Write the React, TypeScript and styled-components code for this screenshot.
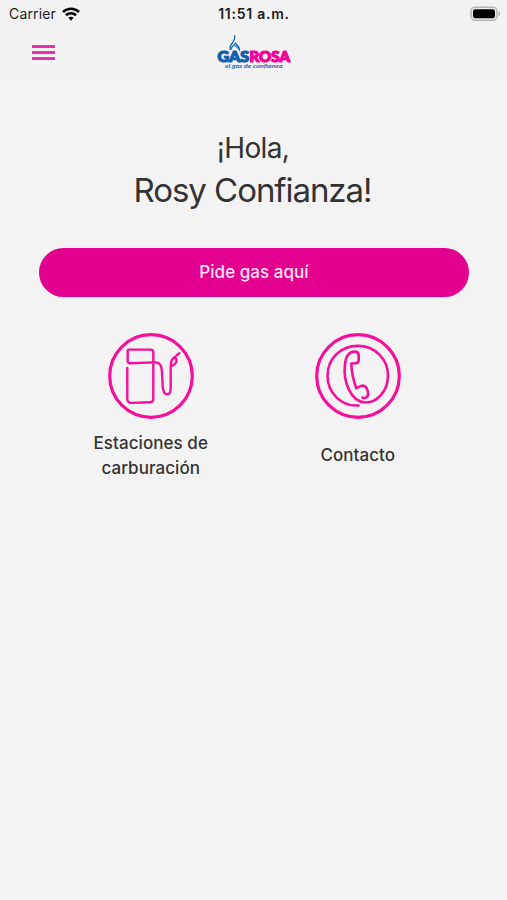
import React from "react";
import styled, { createGlobalStyle } from "styled-components";

const PINK = "#e4008f";
const ICON_PINK = "#f50f9c";

const GlobalStyle = createGlobalStyle`
  * { box-sizing: border-box; }
  body { margin: 0; background: #f3f3f3; font-family: Inter, "Liberation Sans", sans-serif; }
`;

const Screen = styled.div`
  min-height: 900px;
  width: 507px;
  display: flex;
  flex-direction: column;
  background: #f3f3f3;
  color: #333;
`;

const Header = styled.header`
  height: 81px;
  background: #f2f2f2;
`;

const StatusBar = styled.div`
  display: grid;
  grid-template-columns: 1fr auto 1fr;
  align-items: center;
  height: 27px;
  padding: 0 6px 0 9px;
  color: #1c1c1c;
`;

const Carrier = styled.div`
  display: flex;
  align-items: center;
  gap: 6px;
  font-size: 14px;
  line-height: 20px;
  letter-spacing: 0.15px;
`;

const Time = styled.div`
  font-size: 14px;
  font-weight: 600;
  letter-spacing: 0.75px;
  margin-right: 2px;
`;

const Battery = styled.div`
  display: flex;
  justify-content: flex-end;
`;

const NavBar = styled.nav`
  display: grid;
  grid-template-columns: 1fr auto 1fr;
  height: 54px;
  padding: 0 32px;
`;

const MenuButton = styled.button`
  display: flex;
  flex-direction: column;
  gap: 3px;
  width: 23px;
  height: 15px;
  margin-top: 18px;
  padding: 0;
  border: 0;
  background: none;
`;

const MenuLine = styled.span`
  flex: none;
  height: 3px;
  width: 23px;
  background: linear-gradient(#e85db2, #df1f98 40%, #e34bab);
`;

const Greeting = styled.h1`
  display: flex;
  flex-direction: column;
  align-items: center;
  margin: 47px 0 0;
  font-weight: 400;
`;

const Hello = styled.span`
  padding-right: 1px;
  font-size: 28px;
  line-height: 41px;
  letter-spacing: -0.65px;
`;

const Name = styled.span`
  padding-right: 2px;
  font-size: 33px;
  line-height: 42px;
  letter-spacing: -1.05px;
`;

const OrderButton = styled.button`
  height: 49px;
  margin: 37px 38px 0 39px;
  padding: 0 0 1px;
  border: 0;
  border-radius: 25px;
  background: ${PINK};
  color: #ffe3f6;
  font: 500 17px/48px Inter, sans-serif;
  letter-spacing: 0.05px;
`;

const Options = styled.main`
  display: grid;
  grid-template-columns: 207px 207px;
  justify-content: center;
  margin-top: 36px;
  padding-left: 1.5px;
`;

const Option = styled.a`
  display: flex;
  flex-direction: column;
  align-items: center;
`;

const Label = styled.span`
  display: flex;
  align-items: center;
  justify-content: center;
  height: 50px;
  width: 140px;
  margin-top: 11.5px;
  text-align: center;
  font-size: 17px;
  font-weight: 500;
  line-height: 24.5px;
  letter-spacing: 0.06px;
`;

const WifiIcon = () => (
  <svg width="18" height="14" viewBox="0 0 18 14" fill="none" stroke="#080808" strokeWidth="2.6">
    <path d="M1 5C5.4.7 12.6.7 17 5" />
    <path d="M4 8.3c2.8-2.7 7.2-2.7 10 0" />
    <path d="M6.4 10.8 9 13.7l2.6-2.9c-1.4-1.5-3.8-1.5-5.2 0Z" fill="#080808" stroke="none" />
  </svg>
);

const BatteryIcon = () => (
  <svg width="31" height="16" viewBox="0 0 31 16">
    <rect x="1" y="1.2" width="26" height="13" rx="4" fill="#eee" stroke="#b4b4b4" strokeWidth="1.5" />
    <rect x="3" y="3.2" width="22" height="9" rx="2.2" fill="#000" />
    <path d="M28.6 5.4c2 .8 2 3.9 0 4.7Z" fill="#aaa" />
  </svg>
);

const Logo = () => (
  <svg width="76" height="54" viewBox="0 0 76 54">
    <path d="M14.200 23C13.200 19.500 15 17.200 16.800 15.200C18.500 12.800 19.400 11 18.400 8.300" stroke="#1768b5" strokeWidth="1.300" fill="none" />
    <path d="M18.700 15.500C21 17.600 23.500 19 23.500 23C21.800 20.500 20 19.600 18.400 17.500C16.800 18.700 15.200 20 14.600 23" stroke="#1768b5" strokeWidth="1.200" fill="none" />
    <g fontFamily="Lato, sans-serif" fontWeight="900" fontSize="14.3" strokeWidth="1.2">
      <text x="1.5" y="34.500" textLength="31.7" lengthAdjust="spacingAndGlyphs" fill="#1260ae" stroke="#1260ae">GAS</text>
      <text x="33.5" y="34.500" textLength="40.5" lengthAdjust="spacingAndGlyphs" fill="#f20098" stroke="#f20098">ROSA</text>
    </g>
    <text x="9" y="41" textLength="57.5" lengthAdjust="spacingAndGlyphs" fontFamily="Lato, sans-serif" fontWeight="900" fontStyle="italic" fontSize="6.3" fill="#2a70b5">el gas de confianza</text>
  </svg>
);

const PumpIcon = () => (
  <svg width="86" height="86" viewBox="0 0 86 86" fill="none" stroke={ICON_PINK} strokeWidth="2.4" strokeLinecap="round" strokeLinejoin="round">
    <circle cx="43" cy="43" r="41.3" strokeWidth="3.2" />
    <path d="M19.300 35v30.500Q19.300 70 23.500 69.900L42 69.300Q45.300 69.200 45.300 66V19.300Q45.300 16.600 42.500 16.600H20Q19.700 16.600 19.700 18V28Q19.700 30.400 22 30.300L47 29.400C52.500 29.300 53.500 33 54 39L54.700 53.500C55 58 55.800 61.300 59 61.300S62.700 59 62.700 54.500V34.500C62.500 29.500 64 25.500 67 24.200C70 27.500 68.500 31 63.500 33.200M67 24.200C68 22.500 69.500 21.300 71.300 20.200" />
  </svg>
);

const PhoneIcon = () => (
  <svg width="86" height="86" viewBox="0 0 86 86" fill="none" stroke={ICON_PINK} strokeWidth="2.6" strokeLinecap="round" strokeLinejoin="round">
    <circle cx="43" cy="43" r="41.3" strokeWidth="3.2" />
    <path d="M43.500 72.500C26 73.500 12.500 59.500 12.500 43C12.500 25 26 12.900 43 12.900C60 12.900 73 26.500 73 42.500C73 59 61 70 50 69.500C36 68.500 27.800 49 30 31C31 22 35 18.500 40 18.600Q43.500 18.700 43.700 22.500V26.500Q43.700 30.200 40.500 30.300L36.300 30.500C36.500 39 38.300 47 41.300 55.200L46 52.900Q49.500 51.700 51.500 55C53.500 59 54 62.500 51.500 64.200C50.500 65.200 49 65.200 47.500 64.600" />
  </svg>
);

export default function App() {
  return (
    <>
      <GlobalStyle />
      <Screen>
        <Header>
          <StatusBar>
            <Carrier>Carrier <WifiIcon /></Carrier>
            <Time>11:51 a.m.</Time>
            <Battery><BatteryIcon /></Battery>
          </StatusBar>
          <NavBar>
            <MenuButton aria-label="Menú"><MenuLine /><MenuLine /><MenuLine /></MenuButton>
            <Logo />
          </NavBar>
        </Header>
        <Greeting>
          <Hello>¡Hola,</Hello>
          <Name>Rosy Confianza!</Name>
        </Greeting>
        <OrderButton>Pide gas aquí</OrderButton>
        <Options>
          <Option><PumpIcon /><Label>Estaciones de carburación</Label></Option>
          <Option><PhoneIcon /><Label>Contacto</Label></Option>
        </Options>
      </Screen>
    </>
  );
}
